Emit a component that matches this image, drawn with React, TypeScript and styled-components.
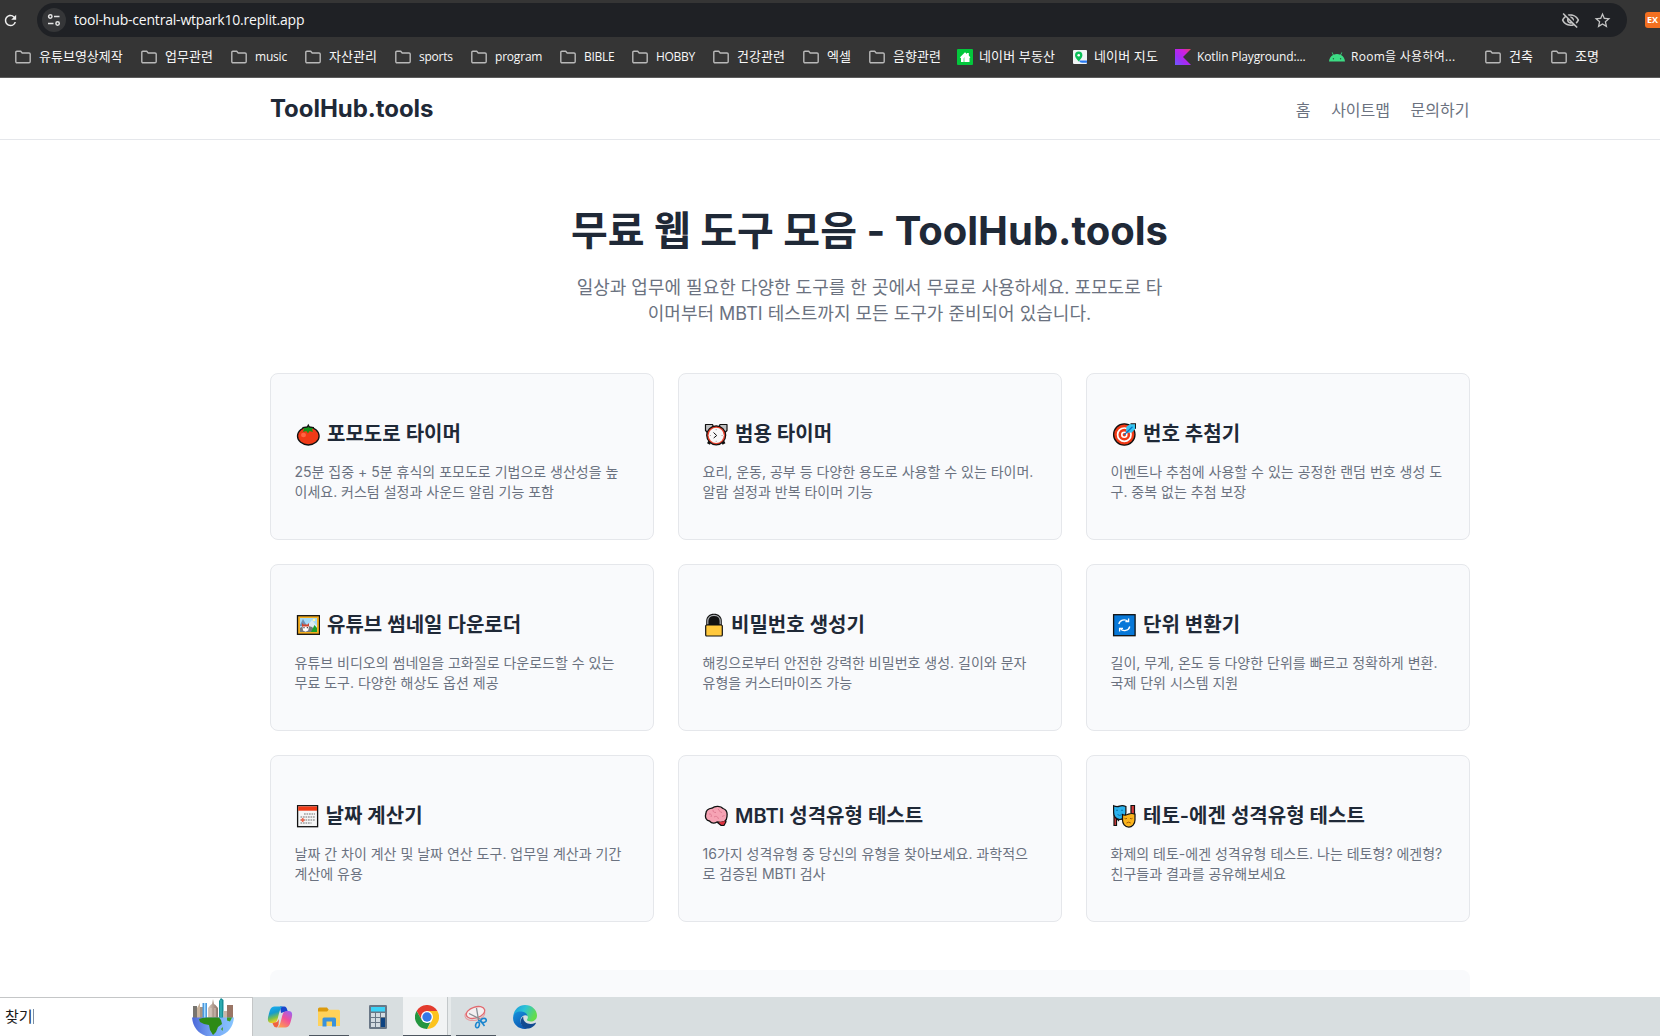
import React from "react";
import styled, { createGlobalStyle } from "styled-components";
import { MdOutlineVisibilityOff, MdRefresh, MdStarBorder } from "react-icons/md";

const GlobalStyle = createGlobalStyle`
  *, *::before, *::after { box-sizing: border-box; }
  html, body { margin: 0; height: 100%; overflow: hidden; background: #fff; }
  body { font-family: Inter, "Noto Sans CJK KR", sans-serif; }
  h1, h2, p { margin: 0; }
  svg { display: block; flex: none; }
`;

const Screen = styled.div`
  height: 1036px;
  width: 1660px;
  display: flex;
  flex-direction: column;
  overflow: hidden;
`;

/* Browser chrome */
const BrowserBar = styled.div`
  height: 78px;
  flex: none;
  background: #353535;
  border-bottom: 1px solid #5c5c5c;
  font-family: "Open Sans", "Noto Sans CJK KR", sans-serif;
  color: #f8f8f8;
`;
const AddressRow = styled.div`
  display: flex;
  align-items: center;
  height: 37px;
  padding: 3px 0 0 2px;
  overflow: hidden;
`;
const Reload = styled.div`
  width: 35px;
  flex: none;
  color: #f0f0f0;
`;
const Omnibox = styled.div`
  width: 1590px;
  flex: none;
  height: 34px;
  border-radius: 17px;
  background: #1f2125;
  display: flex;
  align-items: center;
  padding: 0 15px 0 5px;
`;
const SiteInfo = styled.div`
  width: 24px;
  height: 24px;
  border-radius: 50%;
  background: #353638;
  display: grid;
  place-items: center;
  margin-right: 8px;
`;
const Url = styled.span`
  flex: 1;
  font-size: 14px;
  letter-spacing: -0.2px;
  line-height: 20px;
  white-space: nowrap;
`;
const OmniActions = styled.div`
  display: flex;
  gap: 13px;
  color: #c4c4c4;
`;
const Extension = styled.div`
  width: 24px;
  height: 16px;
  margin-left: 18px;
  flex: none;
  border-radius: 3px;
  background: #f37021;
  color: #fff;
  font: 700 9px/16px "Open Sans", sans-serif;
  padding-left: 2px;
`;
const Bookmarks = styled.div`
  display: flex;
  align-items: center;
  height: 40px;
  padding-left: 15px;
`;
const Bookmark = styled.div<{ $w: number; $ls: number; $gap: number; $ko: boolean }>`
  width: ${(p) => p.$w}px;
  flex: none;
  display: flex;
  align-items: center;
  gap: ${(p) => p.$gap}px;
  white-space: nowrap;
  font-size: ${(p) => (p.$ko ? 13 : 12)}px;
  letter-spacing: ${(p) => p.$ls}px;
  line-height: 18px;
  & > span {
    padding-bottom: ${(p) => (p.$ko ? 2 : 0)}px;
  }
`;

/* Website */
const Site = styled.div`
  flex: 1;
  min-height: 0;
  overflow: hidden;
  background: #fff;
`;
const SiteHeader = styled.header`
  height: 62px;
  border-bottom: 1px solid #e5e7eb;
`;
const Container = styled.div`
  width: 1200px;
  margin: 0 auto 0 270px;
`;
const HeaderInner = styled(Container)`
  height: 61px;
  display: flex;
  justify-content: space-between;
  align-items: center;
`;
const Brand = styled.div`
  font-size: 24px;
  font-weight: 700;
  line-height: 36px;
  letter-spacing: -0.05px;
  color: #1f2937;
`;
const Nav = styled.nav`
  display: flex;
  gap: 20.6px;
  padding: 3px 0.5px 0 0;
  font-size: 16px;
  line-height: 24px;
  color: #6b7280;
`;
const Hero = styled.section`
  height: 233px;
  padding: 61px 1px 0 0;
  text-align: center;
`;
const HeroTitle = styled.h1`
  font-size: 40px;
  font-weight: 700;
  line-height: 60px;
  color: #1f2937;
`;
const HeroText = styled.p`
  margin-top: 14px;
  font-size: 18px;
  line-height: 26px;
  color: #6b7280;
`;
const Grid = styled.div`
  display: grid;
  grid-template-columns: repeat(3, 384px);
  gap: 24px;
`;
const Card = styled.article`
  height: 167px;
  padding: 46px 24px 0;
  border: 1px solid #e5e7eb;
  border-radius: 8px;
  background: #f9fafc;
`;
const CardTitle = styled.h2`
  display: flex;
  align-items: center;
  height: 28px;
  font-size: 20px;
  font-weight: 600;
  line-height: 28px;
  color: #1f2937;
  white-space: nowrap;
`;
const EmojiCell = styled.span<{ $w: number }>`
  width: ${(p) => p.$w}px;
  padding-left: 1px;
  flex: none;
`;
const CardText = styled.p`
  margin: 14px 0 0 -0.5px;
  font-size: 14px;
  line-height: 20px;
  color: #6b7280;
  white-space: nowrap;
`;
const NextSection = styled.section`
  margin-top: 48px;
  height: 200px;
  border-radius: 8px;
  background: #f9fafc;
`;

/* Taskbar */
const Taskbar = styled.div`
  height: 39px;
  flex: none;
  display: flex;
  background: #d8dee0;
`;
const Search = styled.div`
  width: 253px;
  border-top: 1px solid #c4c6c7;
  border-right: 1px solid #c4c6c7;
  background: #fff;
  display: flex;
  justify-content: space-between;
  padding: 0 18px 0 5px;
  font-family: "Noto Sans CJK KR", sans-serif;
  font-size: 15px;
  line-height: 36px;
  color: #1c1c1c;
`;
const Query = styled.span`
  display: flex;
  align-items: center;
  padding-bottom: 2px;
`;
const Caret = styled.i`
  width: 1px;
  height: 15px;
  background: #7d8fa3;
`;
const Apps = styled.div`
  display: flex;
  gap: 1px;
  padding-left: 3px;
`;
const AppButton = styled.div<{ $open?: boolean; $active?: boolean }>`
  width: 48px;
  height: 39px;
  display: grid;
  place-items: center;
  background: ${(p) => (p.$active ? "linear-gradient(90deg,#f1f3f4 44px,#c3c8ca 44px,#c3c8ca 45px,#e6eaeb 45px)" : "none")};
  position: relative;
  &::after {
    content: "";
    display: ${(p) => (p.$open ? "block" : "none")};
    position: absolute;
    bottom: 0;
    left: ${(p) => (p.$active ? 0 : 4)}px;
    right: ${(p) => (p.$active ? 0 : 4)}px;
    height: 1px;
    background: #4d5660;
  }
`;

const FolderIcon = () => (
  <svg width="16" height="14" viewBox="0 0 16 14" fill="none" stroke="#b9b9b9" strokeWidth="1.4">
    <path d="M.8 2.3Q.8 1.2 1.9 1.2H5.7L7.2 3H14Q15.2 3 15.2 4.1V11.5Q15.2 12.7 14 12.7H2Q.8 12.7.8 11.5Z" />
  </svg>
);
const HouseIcon = () => (
  <svg width="16" height="16" viewBox="0 0 16 16">
    <rect width="16" height="16" rx="1" fill="#03c73c" />
    <path d="M2.8 8.500 8 3.2 10 5V4h1.8v2.6L13.4 8.500 12.500 9v4H4V9Z" fill="#fff" />
    <path d="M6 13V9.5L8 8v5Z" fill="#b4efc3" />
  </svg>
);
const MapIcon = () => (
  <svg width="14" height="14" viewBox="0 0 14 14">
    <rect width="14" height="14" rx="1" fill="#f1f4f5" />
    <path d="M6 10.500h8V12.800H9Q6.5 12.800 6 10.500Z" fill="#2878f0" />
    <path d="M5.7 1.6a3.7 3.7 0 0 0-3.7 3.8c0 2.4 2.2 3.6 3.7 6 1.5-2.4 3.7-3.6 3.7-6a3.7 3.7 0 0 0-3.7-3.8Z" fill="#0bbf58" />
    <circle cx="5.7" cy="5.2" r="1.3" fill="#fff" />
  </svg>
);
const KotlinIcon = () => (
  <svg width="16" height="16" viewBox="0 0 16 16">
    <defs>
      <linearGradient id="kt" x1="1" y1="0" x2="0" y2="1">
        <stop offset="0" stopColor="#e44857" />
        <stop offset=".3" stopColor="#d01ee0" />
        <stop offset=".65" stopColor="#a02df5" />
        <stop offset="1" stopColor="#6a5cff" />
      </linearGradient>
    </defs>
    <path d="M0 0H16L8 8 16 16H0Z" fill="url(#kt)" />
  </svg>
);
const AndroidIcon = () => (
  <svg width="16" height="16" viewBox="0 0 16 16">
    <path d="M0 12.5C.3 9.3 1.8 7.2 4 6L2.7 3.6l.6-.3L4.7 5.700c2-.9 4.6-.9 6.600 0l1.400-2.4.6.3L12 6c2.200 1.200 3.700 3.300 4 6.500Z" fill="#3ddc84" />
    <circle cx="4.400" cy="9.700" r=".7" fill="#27633f" />
    <circle cx="11.600" cy="9.700" r=".7" fill="#27633f" />
  </svg>
);
const TuneIcon = () => (
  <svg width="14" height="14" viewBox="0 0 14 14" fill="none" stroke="#e3e3e3" strokeWidth="1.500">
    <circle cx="3.300" cy="3.500" r="1.700" />
    <path d="M7 3.500H12.500M1 10.500H6.500" />
    <circle cx="10.600" cy="10.500" r="1.700" />
  </svg>
);

type Mark = [React.ComponentType, string, number, number, number];
/* icon, label, cell width, letter spacing, icon gap */
const marks: Mark[] = [
  [FolderIcon, "유튜브영상제작", 126, 0, 8],
  [FolderIcon, "업무관련", 90, 0, 8],
  [FolderIcon, "music", 74, -0.2, 8],
  [FolderIcon, "자산관리", 90, 0, 8],
  [FolderIcon, "sports", 76, -0.25, 8],
  [FolderIcon, "program", 89, -0.2, 8],
  [FolderIcon, "BIBLE", 72, -0.25, 8],
  [FolderIcon, "HOBBY", 81, -0.3, 8],
  [FolderIcon, "건강관련", 90, 0, 8],
  [FolderIcon, "엑셀", 66, 0, 8],
  [FolderIcon, "음향관련", 88, 0, 8],
  [HouseIcon, "네이버 부동산", 116, 0.15, 6],
  [MapIcon, "네이버 지도", 102, 0.15, 7],
  [KotlinIcon, "Kotlin Playground:...", 154, -0.15, 6],
  [AndroidIcon, "Room을 사용하여...", 156, 0.28, 6],
  [FolderIcon, "건축", 66, 0, 8],
  [FolderIcon, "조명", 60, 0, 8],
];

const Tomato = () => (
  <svg width="24" height="24" viewBox="0 0 24 24">
    <ellipse cx="12.300" cy="14" rx="10.800" ry="9" fill="#f03a17" stroke="#111" strokeWidth="1.300" />
    <ellipse cx="7.500" cy="13" rx="2.500" ry="2.300" fill="#ff6544" />
    <path d="M12.300 3 13.300 5.300 18 5.500 16 7.500 17 10 13.500 9 12 11.500 10.300 8.900 7 10 8 7.300 6.500 5.500 11.300 5.300Z" fill="#16941b" />
    <path d="M6.500 5.600 11.300 5 12.300 3 13.300 5 18 5.600" fill="none" stroke="#111" strokeWidth="1.200" />
  </svg>
);
const Clock = () => (
  <svg width="24" height="24" viewBox="0 0 24 24" stroke="#111" strokeWidth="1.200">
    <path d="m6 19-1.500 3M18.500 19l1.500 3" strokeWidth="3.200" />
    <path d="M1.500 8.500V2.500H8.500L9.500 5 3.500 10.500ZM23 8.500V2.500H16L15 5l6 5.500Z" fill="#bfc0c2" strokeLinejoin="round" />
    <circle cx="12.200" cy="13.300" r="9.500" fill="#e8402a" />
    <circle cx="12.200" cy="13.300" r="7.600" fill="#f8f8f8" stroke="none" />
    <path d="m9.500 10.500 3.200 3-3 2.500" fill="none" strokeWidth="1" />
    <path d="M12.200 7v1.200M12.200 18.800V20M5.800 13.500H7M17.500 13.500h1.200" stroke="#999" strokeWidth=".8" />
  </svg>
);
const Target = () => (
  <svg width="24" height="24" viewBox="0 0 24 24">
    <circle cx="12.300" cy="12.500" r="10.700" fill="#f03a17" stroke="#111" strokeWidth="1.300" />
    <circle cx="12.300" cy="12.700" r="6.700" fill="none" stroke="#fff" strokeWidth="1.700" />
    <circle cx="12.300" cy="12.700" r="2.500" fill="#f03a17" stroke="#fff" strokeWidth="1.600" />
    <path d="m14 9 .5-4.500L18.500 2l5 .2v4L20 10.500l-4.500.3Z" fill="#35c6f2" />
    <path d="M18.500 1.700h5.100v5" fill="none" stroke="#111" strokeWidth="1.100" />
    <path d="M12.300 12.700 20.500 4.700" stroke="#0873c9" strokeWidth="1.200" />
  </svg>
);
const Picture = () => (
  <svg width="24" height="24" viewBox="0 0 24 24">
    <rect x="1.500" y="2.700" width="22" height="18.600" fill="#f5ae20" stroke="#111" strokeWidth="1.300" />
    <rect x="4" y="5" width="17" height="14" fill="#a4daf7" />
    <path d="m4 12 3-6 4 7H4Z" fill="#7091b3" />
    <path d="m12 12 4-5 5 6v2h-9Z" fill="#dcebf3" />
    <circle cx="18" cy="7" r="1.300" fill="#fff9a8" />
    <path d="M4 19v-4l5-3 7 2 5 5Z" fill="#74777a" />
    <path d="m15 19 3.500-7 2.500 3v4Z" fill="#18a12c" />
    <path d="m6 10 1.500 1.500h4L13 10v4H6Z" fill="#d0452c" />
    <path d="M6.500 13.500h6.500l-.8 4-2.700 1.300-2.500-1.300Z" fill="#fff" />
    <path d="M8 14v1.300M11.300 14v1.300" stroke="#222" strokeWidth="1" />
  </svg>
);
const Lock = () => (
  <svg width="20" height="24" viewBox="0 0 20 24">
    <path d="M2.200 12V8C2.200 3.500 5.500.8 10 .8s7.800 2.700 7.800 7.200V12Z" fill="#111" />
    <path d="M3.800 11.500V8C3.800 4.500 6.400 2.300 10 2.300s6.200 2.200 6.200 5.700V11.500" fill="none" stroke="#aeb1b5" strokeWidth="1.200" />
    <rect x="1.700" y="12" width="16.600" height="11" rx="1" fill="#ffc83d" stroke="#111" strokeWidth="1.200" />
  </svg>
);
const Cycle = () => (
  <svg width="24" height="24" viewBox="0 0 24 24">
    <rect x="1.600" y="1.700" width="21.500" height="21" fill="#0878d8" stroke="#111" strokeWidth="1.300" />
    <g fill="none" stroke="#fff" strokeWidth="1.300">
      <path d="M17.800 13.500a5.500 5.500 0 0 1-9.500 2.200M6.800 11A5.500 5.500 0 0 1 16 8.500" />
      <path d="M7.600 18.500v-3.200H11M16.600 5.500v3.200h-3.200" />
    </g>
  </svg>
);
const Calendar = () => (
  <svg width="23" height="24" viewBox="0 0 23 24">
    <rect x="1.600" y="1.700" width="20" height="21" fill="#f6f6f6" stroke="#111" strokeWidth="1.300" />
    <path d="M2.200 2.400H21v4.300H2.200Z" fill="#f03a17" />
    <path d="M8 10h11M4.500 13h14.500M4.500 16h14.500M4.500 19h11" stroke="#b4b4b4" strokeWidth="2" strokeDasharray="1.700 .8" />
    <path d="M6.700 14v4M4.700 16h4" stroke="#f0694f" strokeWidth="1.600" />
  </svg>
);
const Brain = () => (
  <svg width="24" height="24" viewBox="0 0 24 24">
    <path d="m15 17 6-1.200 1 2L20 21.300h-3L13 18Z" fill="#dc3340" stroke="#111" strokeWidth="1.200" />
    <path d="M8 4.200C11 1.500 17 2 19 4.500c3 1 4.500 4 4 7.500.2 3-1.200 4.500-2.500 5.500L17 18.300 13 18c-3 1.800-6 .8-7.500-1C2 16.500.8 13 1.800 10 2 6.500 5 4.500 8 4.200Z" fill="#f6a3b4" stroke="#111" strokeWidth="1.300" />
    <path d="m14.500 18.500 6-1.500.5 1-1.500 2.500h-2Z" fill="#dc3340" />
    <path d="M9 6c0 2 1 2.500 3 2.500M5 10c2-.5 3 1 2 3M14 5c1.500 1 1.500 3.500 4 3.500M10 13c2.500-1.500 4 0 4.500 2M18 12.500l2.500-1" fill="none" stroke="#e07d94" strokeWidth="1" />
  </svg>
);
const Masks = () => (
  <svg width="24" height="24" viewBox="0 0 24 24">
    <path d="M2 3v18.500h2.500V14L7 17M19 9V1.500h3.500V13" fill="#d83b3b" stroke="#111" strokeWidth="1.200" />
    <path d="M1.600 1.700q3 1.500 6 .4 3-1 6.300.4v6c0 4-2.500 7-6 7-4 0-6.300-3-6.300-7Z" fill="#2bb3ee" stroke="#111" strokeWidth="1.200" />
    <path d="M10.500 10.500q3 1.500 6-.4 3.200-1.200 6.500 0v6c0 4-3 7-6.200 7-4 0-6.300-3.500-6.300-7Z" fill="#fbb41c" stroke="#111" strokeWidth="1.200" />
    <path d="M4 6.500q1-1 2 0M9 6.500q1-1 2 0M5.500 10.500q2.200 2 4.300 0" fill="none" stroke="#0a76ae" strokeWidth="1" />
    <path d="M12.500 14.300q1.300 1 2.500 0M18 14.300q1.300 1 2.500 0M14.500 19q2.200-1.700 4.300 0" fill="none" stroke="#a35d05" strokeWidth="1" />
  </svg>
);

type Tool = { icon: React.ComponentType; cell: number; title: string; lines: [string, string] };
const tools: Tool[] = [
  { icon: Tomato, cell: 32, title: "포모도로 타이머", lines: ["25분 집중 + 5분 휴식의 포모도로 기법으로 생산성을 높", "이세요. 커스텀 설정과 사운드 알림 기능 포함"] },
  { icon: Clock, cell: 32, title: "범용 타이머", lines: ["요리, 운동, 공부 등 다양한 용도로 사용할 수 있는 타이머.", "알람 설정과 반복 타이머 기능"] },
  { icon: Target, cell: 32, title: "번호 추첨기", lines: ["이벤트나 추첨에 사용할 수 있는 공정한 랜덤 번호 생성 도", "구. 중복 없는 추첨 보장"] },
  { icon: Picture, cell: 32, title: "유튜브 썸네일 다운로더", lines: ["유튜브 비디오의 썸네일을 고화질로 다운로드할 수 있는", "무료 도구. 다양한 해상도 옵션 제공"] },
  { icon: Lock, cell: 28, title: "비밀번호 생성기", lines: ["해킹으로부터 안전한 강력한 비밀번호 생성. 길이와 문자", "유형을 커스터마이즈 가능"] },
  { icon: Cycle, cell: 32, title: "단위 변환기", lines: ["길이, 무게, 온도 등 다양한 단위를 빠르고 정확하게 변환.", "국제 단위 시스템 지원"] },
  { icon: Calendar, cell: 30.5, title: "날짜 계산기", lines: ["날짜 간 차이 계산 및 날짜 연산 도구. 업무일 계산과 기간", "계산에 유용"] },
  { icon: Brain, cell: 32, title: "MBTI 성격유형 테스트", lines: ["16가지 성격유형 중 당신의 유형을 찾아보세요. 과학적으", "로 검증된 MBTI 검사"] },
  { icon: Masks, cell: 32, title: "테토-에겐 성격유형 테스트", lines: ["화제의 테토-에겐 성격유형 테스트. 나는 테토형? 에겐형?", "친구들과 결과를 공유해보세요"] },
];

const Globe = () => (
  <svg width="42" height="38" viewBox="0 0 42 38">
    <defs>
      <linearGradient id="sea" x1="0" x2="1">
        <stop offset="0" stopColor="#4b67d8" />
        <stop offset=".5" stopColor="#78a7f5" />
        <stop offset="1" stopColor="#86c5ff" />
      </linearGradient>
      <linearGradient id="stone" x1="0" x2="1">
        <stop offset="0" stopColor="#d8c8bb" />
        <stop offset="1" stopColor="#8d7468" />
      </linearGradient>
    </defs>
    <path d="M1 8h4v12H1Z" fill="#77746f" />
    <path d="M5 10 8 5v15H5Z" fill="#c9b49d" />
    <path d="M8 20V9h3v11Z" fill="#a99482" />
    <path d="M10.500 5h4.500v15h-4.500Z" fill="#4d9be0" />
    <path d="M12 5h1.500v15H12Z" fill="#a8dafa" />
    <path d="M16 20V10l2.500-3 1.500-1 1-5 1 5 1.500 1L26 10v10Z" fill="url(#stone)" />
    <path d="M19 10v9M23 10v9" stroke="#e4d6cb" strokeWidth=".8" />
    <path d="M27 20V3l2-3 2.500 2v18Z" fill="#178f97" />
    <path d="M29 2v17" stroke="#45c6c8" />
    <path d="M31.500 20v-7H35v7Z" fill="#c9b6a8" />
    <path d="M35 20V7h6v13Z" fill="#9a7565" />
    <path d="M0 19.500h42C41 31 33 39 21 39S1 31 0 19.500Z" fill="url(#sea)" />
    <path d="M7 21q3-1.500 8-1.500h12l2 2.500 1 4-4 3-2 5-3 3-3-5-1-5-5-1-4-2Z" fill="#2d8a16" />
    <path d="m35 19.500 5 0-2 4-3-1ZM29 31l2-2-.5 4Z" fill="#3a9a23" />
  </svg>
);
const Copilot = () => (
  <svg width="26" height="24" viewBox="0 0 26 24">
    <defs>
      <linearGradient id="cpA" x1="0" y1="0" x2=".3" y2="1">
        <stop offset="0" stopColor="#1cb0f6" />
        <stop offset=".45" stopColor="#139bd0" />
        <stop offset=".75" stopColor="#7cc04b" />
        <stop offset="1" stopColor="#f4cf20" />
      </linearGradient>
      <linearGradient id="cpB" x1=".8" y1="0" x2=".2" y2="1">
        <stop offset="0" stopColor="#9f62ee" />
        <stop offset=".45" stopColor="#f04f9a" />
        <stop offset="1" stopColor="#ffa04c" />
      </linearGradient>
    </defs>
    <path d="M13 1.500h4.500Q19.500 1.500 20.300 5L21 7h-4l-3 1Z" fill="#1746ce" />
    <path d="M7.500 1.500H15.500C12.500 3 11.800 11 10 15.500 9 18 7 18 4.500 18 .5 18 .3 14.500 1.500 10.500 3 5 3.500 1.500 7.500 1.500Z" fill="url(#cpA)" />
    <path d="M18.500 22.500H10.500C13.500 21 14.200 13 16 8.500 17 6 19 6 21.500 6 25.500 6 25.700 9.500 24.500 13.500 23 19 22.500 22.500 18.500 22.500Z" fill="url(#cpB)" />
    <path d="M5.500 18 10 17q1-1 2-3l-.5 6-1.500 2.500Q7 22.500 6.300 20Z" fill="#f0623e" />
  </svg>
);
const Explorer = () => (
  <svg width="24" height="24" viewBox="0 0 24 24">
    <path d="M1 4q0-1.500 1.500-1.500H10l1.500 2V8H1Z" fill="#dc9a0c" />
    <path d="M1 6.500h9l2-1.700h9.500q1.500 0 1.500 1.500V21H1Z" fill="#ffd25a" />
    <path d="M5.500 21.500V14q0-1.500 1.500-1.500h10.500Q19 12.500 19 14v7.500h-4v-5H9.500v5Z" fill="#3a92dc" />
  </svg>
);
const Calculator = () => (
  <svg width="20" height="26" viewBox="0 0 20 26">
    <rect x="1" y="1" width="18" height="24" rx="1.300" fill="#697786" />
    <rect x="3" y="3" width="14" height="4.500" fill="#3bd2f7" />
    <g fill="#d3dbe1">
      {[9, 14, 19].map((y) => [3, 8].map((x) => <rect key={`${x}-${y}`} x={x} y={y} width="4" height="4" />))}
      <rect x="13" y="9" width="4" height="4" />
    </g>
    <rect x="13" y="14" width="4" height="9" fill="#0d4381" />
  </svg>
);
const ChromeLogo = () => (
  <svg width="24" height="24" viewBox="0 0 24 24">
    <path d="M12 6h10.400A12 12 0 0 1 12 24l5.200-9Z" fill="#fcc31e" />
    <path d="M1.600 6A12 12 0 0 1 22.400 6H12l-5.200 9Z" fill="#e33b2e" />
    <path d="m1.600 6 5.200 9 5.200 3 3.500-1L12 24A12 12 0 0 1 1.600 6Z" fill="#23963f" />
    <circle cx="12" cy="12" r="6" fill="#fff" />
    <circle cx="12" cy="12" r="4.700" fill="#3578e8" />
  </svg>
);
const Snip = () => (
  <svg width="24" height="24" viewBox="0 0 24 24" fill="none">
    <ellipse cx="11" cy="9.500" rx="10" ry="5.800" transform="rotate(-12 11 10)" stroke="#e99a9e" strokeWidth="1" />
    <ellipse cx="11.500" cy="7.500" rx="9.500" ry="5.500" transform="rotate(-18 11.500 7.500)" fill="#f3f0f1" stroke="#e26a6f" strokeWidth="1.300" />
    <path d="M5 8.500 16 14M12.500 3l2 12" stroke="#868e93" strokeWidth="1.300" />
    <ellipse cx="19.500" cy="15.500" rx="2.800" ry="2" transform="rotate(-15 19.500 15.500)" stroke="#1c86cf" strokeWidth="1.600" />
    <ellipse cx="13.500" cy="20" rx="1.800" ry="2.800" transform="rotate(15 13.500 20)" stroke="#1c86cf" strokeWidth="1.600" />
    <path d="m14 15.500 3 .8 3.500 4.700" stroke="#1c86cf" strokeWidth="1.600" />
  </svg>
);
const Edge = () => (
  <svg width="24" height="24" viewBox="0 0 24 24">
    <defs>
      <linearGradient id="edA" x1="0" x2="1" y2=".4">
        <stop offset="0" stopColor="#1596dc" />
        <stop offset=".5" stopColor="#2dc3d6" />
        <stop offset="1" stopColor="#63dc4c" />
      </linearGradient>
      <linearGradient id="edB" x1="0" x2=".6" y2="1">
        <stop offset="0" stopColor="#1792dc" />
        <stop offset="1" stopColor="#0a57b2" />
      </linearGradient>
    </defs>
    <path d="M.3 11C1 4.500 6 0 12 0c7 0 12 5 12 10.500 0 4-3 6-6.200 6-2.500 0-4.300-.8-3.800-1.800.8-1.500 1-2 .7-3.200C13.500 7.500 5 5.500.3 11Z" fill="url(#edA)" />
    <path d="M.1 12.500C.5 8 4.500 6.300 8.500 6.600c3.500.3 5.500 2.200 6 4.200-3-1.800-7 .7-7 4.700 0 4.500 3.500 7.500 7.500 8.100C7 25.500-.5 20 .1 12.500Z" fill="url(#edB)" />
    <path d="M10.300 11.500C6.500 14 6.500 21 12.500 23.400c4.500 1 8.500-2 10.300-5 .3-.6-.2-.8-.8-.5-5.500 2.600-12.500-.1-11.700-6.400Z" fill="#124a91" />
  </svg>
);

export default function App() {
  return (
    <Screen>
      <GlobalStyle />
      <BrowserBar>
        <AddressRow>
          <Reload><MdRefresh size={17} /></Reload>
          <Omnibox>
            <SiteInfo><TuneIcon /></SiteInfo>
            <Url>tool-hub-central-wtpark10.replit.app</Url>
            <OmniActions>
              <MdOutlineVisibilityOff size={19} />
              <MdStarBorder size={19} />
            </OmniActions>
          </Omnibox>
          <Extension>EX</Extension>
        </AddressRow>
        <Bookmarks>
          {marks.map(([Icon, label, w, ls, gap]) => (
            <Bookmark key={label} $w={w} $ls={ls} $gap={gap} $ko={/^[가-힣]/.test(label)}>
              <Icon />
              <span>{label}</span>
            </Bookmark>
          ))}
        </Bookmarks>
      </BrowserBar>
      <Site>
        <SiteHeader>
          <HeaderInner>
            <Brand>ToolHub.tools</Brand>
            <Nav>
              <span>홈</span>
              <span>사이트맵</span>
              <span>문의하기</span>
            </Nav>
          </HeaderInner>
        </SiteHeader>
        <Container>
          <Hero>
            <HeroTitle>무료 웹 도구 모음 - ToolHub.tools</HeroTitle>
            <HeroText>
              일상과 업무에 필요한 다양한 도구를 한 곳에서 무료로 사용하세요. 포모도로 타
              <br />
              이머부터 MBTI 테스트까지 모든 도구가 준비되어 있습니다.
            </HeroText>
          </Hero>
          <Grid>
            {tools.map(({ icon: Icon, cell, title, lines }) => (
              <Card key={title}>
                <CardTitle>
                  <EmojiCell $w={cell}><Icon /></EmojiCell>
                  {title}
                </CardTitle>
                <CardText>
                  {lines[0]}
                  <br />
                  {lines[1]}
                </CardText>
              </Card>
            ))}
          </Grid>
          <NextSection />
        </Container>
      </Site>
      <Taskbar>
        <Search>
          <Query>찾기<Caret /></Query>
          <Globe />
        </Search>
        <Apps>
          <AppButton><Copilot /></AppButton>
          <AppButton $open><Explorer /></AppButton>
          <AppButton><Calculator /></AppButton>
          <AppButton $open $active><ChromeLogo /></AppButton>
          <AppButton $open><Snip /></AppButton>
          <AppButton><Edge /></AppButton>
        </Apps>
      </Taskbar>
    </Screen>
  );
}
